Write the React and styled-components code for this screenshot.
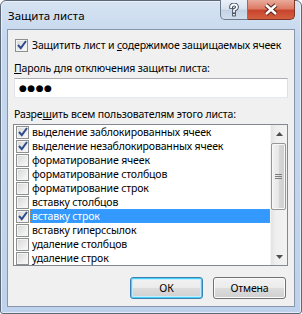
import React from "react";
import styled, { createGlobalStyle, css } from "styled-components";

const GlobalStyle = createGlobalStyle`
  html, body { margin: 0; padding: 0; background: #ffffff; }
  * { box-sizing: border-box; }
`;

const Window = styled.div`
  width: 302px;
  height: 314px;
  display: flex;
  flex-direction: column;
  padding: 0 6px 6px 6px;
  border: 1px solid #5c6877;
  border-radius: 6px 6px 3px 3px;
  background: linear-gradient(#d6e3f2 0, #c4d7ee 40px, #bed3eb 100%);
  box-shadow: inset 0 0 0 1px rgba(255, 255, 255, 0.55);
`;

const TitleBar = styled.div`
  height: 28px;
  display: flex;
  justify-content: space-between;
  align-items: flex-start;
`;

const Title = styled.div`
  padding: 7px 0 0 1px;
  font-family: "Noto Sans", "Open Sans", sans-serif;
  font-size: 11.5px;
  color: #000;
`;

const Caption = styled.div`
  display: flex;
  margin-top: -1px;
`;

const CapButton = styled.div`
  height: 20px;
  display: flex;
  align-items: center;
  justify-content: center;
  border: 1px solid #6d7b8d;
  border-top: none;
  ${p => p.close
    ? css`
      width: 47px;
      border-color: #7e3427;
      border-left: none;
      border-radius: 0 0 5px 0;
      background: linear-gradient(#e9aa9b 0%, #dc7c65 45%, #c8452d 55%, #d2603f 100%);
    `
    : css`
      width: 28px;
      border-radius: 0 0 0 5px;
      background: linear-gradient(#eaf0f7 0%, #d9e3ef 45%, #c3d2e3 55%, #d1dded 100%);
    `}
`;

const Client = styled.div`
  flex: 1;
  display: flex;
  flex-direction: column;
  padding: 8px 6px 0 6px;
  border: 1px solid #8796aa;
  background: #f0f0f0;
  font-family: "Noto Sans", "DejaVu Sans", sans-serif;
  font-size: 10.5px;
  letter-spacing: -0.15px;
  color: #000;
`;

const CheckRow = styled.div`
  height: 14px;
  display: flex;
  align-items: center;
  gap: 4px;
  padding-left: 1px;
  white-space: nowrap;
`;

const Box = styled.span`
  width: 13px;
  height: 13px;
  flex: none;
  display: flex;
  align-items: center;
  justify-content: center;
  border: 1px solid #8e8f8f;
  background: linear-gradient(135deg, #d6d6d6 0%, #f4f4f4 80%, #ffffff 100%);
  box-shadow: inset 0 0 0 1px #f4f4f4;
`;

const Label = styled.div`
  height: 14px;
  line-height: 14px;
  margin-top: 9px;
  white-space: nowrap;
`;

const Key = styled.u`
  text-underline-offset: 1px;
`;

const PasswordBox = styled.div`
  height: 20px;
  margin-top: 3px;
  padding-left: 4px;
  display: flex;
  align-items: center;
  border: 1px solid #abadb3;
  border-left-color: #e2e3ea;
  border-right-color: #dbdfe6;
  border-bottom-color: #e3e9ef;
  background: #fff;
  font-family: "DejaVu Sans", sans-serif;
  font-size: 9px;
  letter-spacing: 0.5px;
`;

const ListBox = styled.div`
  height: 142px;
  margin: 3px 0 0 -1px;
  display: flex;
  border: 1px solid #828790;
  background: #fff;
`;

const Items = styled.div`
  flex: 1;
  display: flex;
  flex-direction: column;
`;

const Item = styled.div`
  height: 14px;
  display: flex;
  align-items: center;
  padding-left: 2px;
`;

const ItemText = styled.span`
  flex: 1;
  height: 14px;
  line-height: 12px;
  margin-left: 1px;
  padding-left: 1px;
  white-space: nowrap;
  border: 1px solid transparent;
  ${p => p.selected && css`
    background: #3399ff;
    color: #fff;
    border: 1px dotted #c3813c;
  `}
`;

const ScrollBar = styled.div`
  width: 17px;
  display: flex;
  flex-direction: column;
  background: linear-gradient(90deg, #e3e3e3, #efefef 30%, #f2f2f2);
  border-left: 1px solid #f4f4f4;
`;

const Arrow = styled.div`
  height: 17px;
  display: flex;
  align-items: center;
  justify-content: center;
`;

const Track = styled.div`
  flex: 1;
  padding: 1px 1px 0 0;
`;

const Thumb = styled.div`
  height: 67px;
  display: flex;
  align-items: center;
  justify-content: center;
  border: 1px solid #969696;
  border-radius: 2px;
  background: linear-gradient(90deg, #f2f2f2 0%, #e6e6e6 50%, #d6d6d6 51%, #cfcfcf 100%);
  box-shadow: inset 0 0 0 1px #f7f7f7;
`;

const Buttons = styled.div`
  display: flex;
  justify-content: flex-end;
  gap: 10px;
  margin-top: 11px;
  padding-right: 2px;
`;

const Button = styled.div`
  width: 73px;
  height: 22px;
  display: flex;
  align-items: center;
  justify-content: center;
  border: 1px solid #707070;
  border-radius: 3px;
  background: linear-gradient(#f2f2f2 0%, #ebebeb 50%, #dddddd 51%, #cfcfcf 100%);
  box-shadow: inset 0 0 0 1px #fcfcfc;
  ${p => p.primary && css`
    border-color: #3c7fb1;
    box-shadow: inset 0 0 0 1px #48d3fb, inset 0 0 0 2px #c5edfb;
  `}
`;

const Check = ({ checked }) => (
  <Box>
    {checked && (
      <svg width="10" height="10" viewBox="0 0 10 10">
        <path d="M1 5 L3.8 8.2 L9 1" fill="none" stroke="#2e4d8c" strokeWidth="2" />
      </svg>
    )}
  </Box>
);

const items = [
  { title: "выделение заблокированных ячеек", checked: true },
  { title: "выделение незаблокированных ячеек", checked: true },
  { title: "форматирование ячеек" },
  { title: "форматирование столбцов" },
  { title: "форматирование строк" },
  { title: "вставку столбцов" },
  { title: "вставку строк", checked: true, selected: true },
  { title: "вставку гиперссылок" },
  { title: "удаление столбцов" },
  { title: "удаление строк" },
];

const App = () => (
  <>
    <GlobalStyle />
    <Window>
      <TitleBar>
        <Title>Защита листа</Title>
        <Caption>
          <CapButton>
            <svg width="12" height="14" viewBox="0 0 12 14">
              <g fill="none" strokeLinecap="square">
                <path d="M3 4 Q3 1.5 6 1.5 Q9 1.5 9 4 Q9 5.8 6 7 L6 8.5" stroke="#3a4657" strokeWidth="3.6" />
                <path d="M3 4 Q3 1.5 6 1.5 Q9 1.5 9 4 Q9 5.8 6 7 L6 8.5" stroke="#fff" strokeWidth="1.8" />
              </g>
              <rect x="4.2" y="10" width="3.6" height="3.4" fill="#3a4657" />
              <rect x="5.1" y="10.9" width="1.8" height="1.6" fill="#fff" />
            </svg>
          </CapButton>
          <CapButton close>
            <svg width="16" height="13" viewBox="0 0 16 13">
              <path d="M3 2 L13 11 M13 2 L3 11" stroke="#5b2218" strokeWidth="4.4" />
              <path d="M3 2 L13 11 M13 2 L3 11" stroke="#fff" strokeWidth="2.4" />
            </svg>
          </CapButton>
        </Caption>
      </TitleBar>
      <Client>
        <CheckRow>
          <Check checked />
          <span>Защитить лист и <Key>с</Key>одержимое защищаемых ячеек</span>
        </CheckRow>
        <Label><Key>П</Key>ароль для отключения защиты листа:</Label>
        <PasswordBox>●●●●</PasswordBox>
        <Label>Разре<Key>ш</Key>ить всем пользователям этого листа:</Label>
        <ListBox>
          <Items>
            {items.map(item => (
              <Item key={item.title}>
                <Check checked={item.checked} />
                <ItemText selected={item.selected}>{item.title}</ItemText>
              </Item>
            ))}
          </Items>
          <ScrollBar>
            <Arrow>
              <svg width="7" height="4" viewBox="0 0 7 4"><path d="M0 4 L3.5 0 L7 4 Z" fill="#4d4d4d" /></svg>
            </Arrow>
            <Track>
              <Thumb>
                <svg width="7" height="7" viewBox="0 0 7 7">
                  <path d="M0 1.5 H7 M0 3.5 H7 M0 5.5 H7" stroke="#7d7d7d" strokeWidth="1" />
                </svg>
              </Thumb>
            </Track>
            <Arrow>
              <svg width="7" height="4" viewBox="0 0 7 4"><path d="M0 0 L7 0 L3.5 4 Z" fill="#4d4d4d" /></svg>
            </Arrow>
          </ScrollBar>
        </ListBox>
        <Buttons>
          <Button primary>ОК</Button>
          <Button>Отмена</Button>
        </Buttons>
      </Client>
    </Window>
  </>
);

export default App;
